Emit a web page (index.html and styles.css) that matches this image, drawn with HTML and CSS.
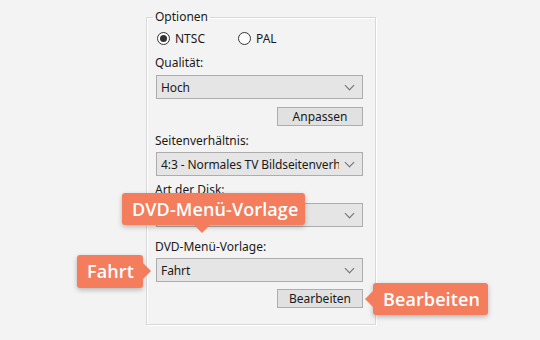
FILE: index.html
```html
<!DOCTYPE html>
<html lang="de">
<head>
    <meta charset="UTF-8">
    <title>DVD Optionen</title>
    <link rel="stylesheet" href="styles.css">
</head>
<body>
    <div class="stage">
        <fieldset class="options">
            <legend>Optionen</legend>
            <div class="radios">
                <span class="radio checked"><i></i>NTSC</span>
                <span class="radio"><i></i>PAL</span>
            </div>

            <div class="label label-quality">Qualität:</div>
            <div class="select"><span>Hoch</span><b class="chev"></b></div>
            <div class="button-row"><button class="btn">Anpassen</button></div>

            <div class="label label-ratio">Seitenverhältnis:</div>
            <div class="select"><span>4:3 - Normales TV Bildseitenverhältnis</span><b class="chev"></b></div>

            <div class="label label-disk">Art der Disk:</div>
            <div class="select"><span>DVD</span><b class="chev"></b></div>

            <div class="label label-menu">DVD-Menü-Vorlage:</div>
            <div class="select"><span>Fahrt</span><b class="chev"></b></div>
            <div class="button-row row-edit"><button class="btn">Bearbeiten</button></div>
        </fieldset>

        <div class="callout callout-menu">DVD-Menü-Vorlage</div>
        <div class="callout callout-fahrt">Fahrt</div>
        <div class="callout callout-edit">Bearbeiten</div>
    </div>
</body>
</html>
```

FILE: styles.css
```css
body {
    margin: 0;
    background-color: #f3f3f3;
    font-family: "Noto Sans", "Open Sans", sans-serif;
    font-size: 12px;
    color: #1a1a1a;
}
.stage {
    position: relative;
    width: 540px;
    height: 340px;
    overflow: hidden;
}
.options {
    margin: 9px 0 0 146px;
    width: 230px;
    min-width: 0;
    box-sizing: border-box;
    height: 316px;
    padding: 6px 12px 0 9px;
    border: 1px solid #d8d8d8;
    box-shadow: inset 1px 1px 0 #fff, 1px 1px 0 #fff;
}
.options legend {
    margin-left: -3px;
    padding: 0 2px;
    line-height: 16px;
    color: #1a1a1a;
}
.radios {
    display: flex;
    height: 15px;
    align-items: center;
}
.radio {
    display: flex;
    align-items: center;
    gap: 5px;
    width: 80px;
    margin-left: 1px;
}
.radio i {
    width: 13px;
    height: 13px;
    box-sizing: border-box;
    border: 1px solid #333;
    border-radius: 50%;
    background: #fff;
    display: flex;
    align-items: center;
    justify-content: center;
}
.radio.checked i::after {
    content: "";
    width: 7px;
    height: 7px;
    border-radius: 50%;
    background: #333;
}
.label {
    line-height: 16px;
    margin-bottom: 3px;
    margin-left: -1px;
}
.label-quality { margin-top: 9px; margin-bottom: 4px; }
.label-ratio { margin-top: 7px; }
.label-disk { margin-top: 6px; margin-bottom: 5px; }
.label-menu { margin-top: 12px; margin-bottom: 3px; }
.select {
    height: 24px;
    box-sizing: border-box;
    border: 1px solid #adadad;
    background: #e5e5e5;
    display: flex;
    align-items: center;
    padding: 0 6px 0 4px;
    min-width: 0;
}
.select span {
    flex: 1;
    min-width: 0;
    white-space: nowrap;
    overflow: hidden;
    margin-right: 7px;
    letter-spacing: -0.1px;
}
.chev {
    flex: none;
    width: 6px;
    height: 6px;
    border-right: 1px solid #6d6d6d;
    border-bottom: 1px solid #6d6d6d;
    transform: rotate(45deg);
    margin: -4px 3px 0 0;
}
.button-row {
    display: flex;
    justify-content: flex-end;
    margin-top: 8px;
}
.row-edit { margin-top: 7px; }
.btn {
    width: 86px;
    height: 19px;
    padding: 0;
    font-family: inherit;
    font-size: 12px;
    color: #1a1a1a;
    background: #e1e1e1;
    border: 1px solid #adadad;
}

/* callouts */
.callout {
    position: absolute;
    height: 32px;
    line-height: 32px;
    padding: 0 10px;
    background: #f47d5e;
    color: #fff;
    font-family: "Open Sans", sans-serif;
    font-weight: 600;
    font-size: 18px;
    letter-spacing: 0.1px;
    border-radius: 3px;
    box-shadow: 0 2px 5px rgba(0, 0, 0, 0.25);
    white-space: nowrap;
}
.callout::after {
    content: "";
    position: absolute;
    border: 8px solid transparent;
}
.callout-menu {
    left: 122px;
    top: 193px;
    width: 163px;
}
.callout-menu::after {
    left: 72px;
    top: 100%;
    border-top-color: #f47d5e;
    border-bottom: 0;
}
.callout-fahrt {
    left: 77px;
    top: 255px;
    width: 46px;
    height: 33px;
}
.callout-fahrt::after {
    left: 100%;
    top: 8px;
    border-left-color: #f47d5e;
    border-right: 0;
}
.callout-edit {
    left: 373px;
    top: 283px;
    width: 95px;
}
.callout-edit::after {
    right: 100%;
    top: 8px;
    border-right-color: #f47d5e;
    border-left: 0;
}
```
